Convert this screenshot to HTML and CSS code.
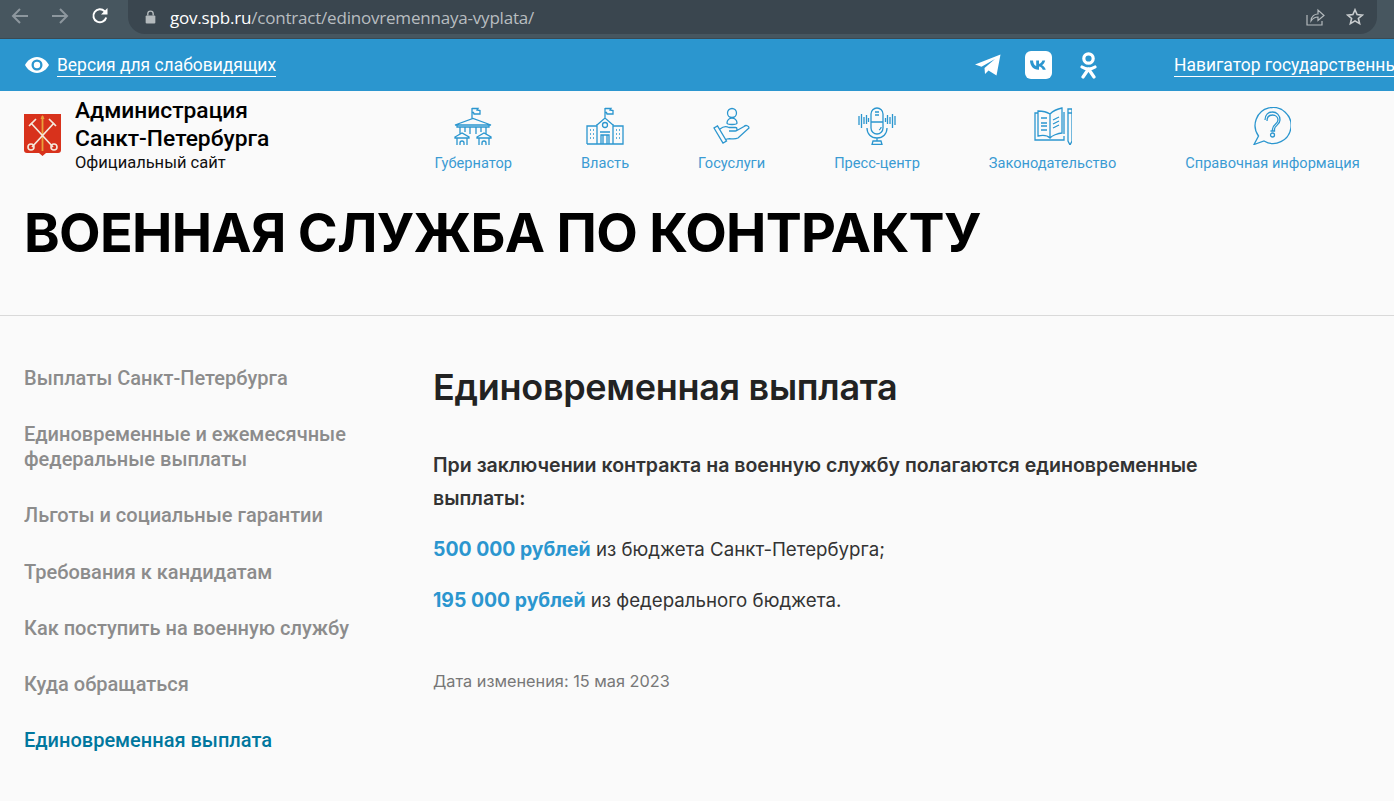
FILE: index.html
```html
<!DOCTYPE html>
<html lang="ru">
  <head>
    <meta charset="utf-8">
    <title>Единовременная выплата</title>
    <link rel="stylesheet" href="styles.css">
  </head>
  <body>
    <div class="chrome">
      <svg class="nav-ico" width="20" height="20" viewBox="0 0 20 20"><path d="M18 10H3M10 3l-7 7 7 7" fill="none" stroke="#8d979e" stroke-width="2"/></svg>
      <svg class="nav-ico" width="20" height="20" viewBox="0 0 20 20"><path d="M2 10h15M10 3l7 7-7 7" fill="none" stroke="#8d979e" stroke-width="2"/></svg>
      <svg class="nav-ico" width="20" height="20" viewBox="0 0 20 20"><path d="M16.2 11.500a6.500 6.500 0 1 1-1.600-6.200L16.500 7" fill="none" stroke="#fff" stroke-width="2"/><path d="M17.500 2v6.500H11z" fill="#fff"/></svg>
      <div class="omnibox">
        <svg width="11" height="14" viewBox="0 0 10 13"><path d="M2.500 5V3.500a2.500 2.500 0 0 1 5 0V5" fill="none" stroke="#b4babd" stroke-width="1.300"/><rect x="0.500" y="5" width="9" height="7.500" rx="1" fill="#b4babd"/></svg>
        <span class="url"><b>gov.spb.ru</b>/contract/edinovremennaya-vyplata/</span>
        <svg class="share" width="20" height="20" viewBox="0 0 20 20"><path d="M2 8v10h15v-4" fill="none" stroke="#b4babd" stroke-width="1.200"/><path d="M6 14c0-5 4-7 7-7V3l6 5.500-6 5V10c-3 0-5 1-7 4z" fill="none" stroke="#b4babd" stroke-width="1.200"/></svg>
        <svg width="18" height="18" viewBox="0 0 18 18"><path d="M9 1.800l2.100 4.800 5.200.5-3.900 3.400 1.200 5.100L9 12.900l-4.600 2.700 1.200-5.100L1.700 7.100l5.200-.5z" fill="none" stroke="#c9cdcf" stroke-width="1.600"/></svg>
      </div>
    </div>

    <div class="topbar">
      <svg class="eye" width="24" height="16" viewBox="0 0 24 16"><path fill-rule="evenodd" d="M12 0c5.500 0 9.700 3.700 12 8-2.300 4.300-6.500 8-12 8S2.300 12.300 0 8c2.300-4.300 6.500-8 12-8zm0 2.500a5.500 5.500 0 1 0 0 11 5.500 5.500 0 0 0 0-11z" fill="#fff"/><circle cx="12" cy="8" r="3.200" fill="#fff"/></svg>
      <a class="toplink" href="#">Версия для слабовидящих</a>
      <div class="socials">
        <svg class="tg" width="26" height="22" viewBox="0 0 26 22"><path d="M0 10.500L25.500 0.500 21.500 21.500 13.500 16.500 10 20 9.500 14 20 5 6.500 12.800z" fill="#fff"/></svg>
        <svg class="vk" width="27" height="28" viewBox="0 0 27 28"><rect width="27" height="28" rx="6" fill="#fff"/><path d="M5 9.500h3c.3 3.500 1.800 5.200 3.200 5.600V9.500H14v3.400c1.400-.2 2.800-1.700 3.400-3.400h2.800c-.5 2.300-2 3.900-3.200 4.700 1.200.6 3 2 3.800 4.500h-3c-.7-1.800-2-3-3.800-3.200v3.200h-.6C8.300 18.700 5.200 15 5 9.500z" fill="#2b96cf"/></svg>
        <svg width="17" height="27" viewBox="0 0 17 27"><circle cx="8.500" cy="6.500" r="4.700" fill="none" stroke="#fff" stroke-width="3.200"/><path d="M2 15c4 2.500 9 2.500 13 0M8.500 17l-5.500 8M8.500 17l5.500 8" fill="none" stroke="#fff" stroke-width="3.200" stroke-linecap="round"/></svg>
      </div>
      <a class="toplink nav-gov" href="#">Навигатор государственных услуг</a>
    </div>

    <header class="site-head">
      <div class="brand">
        <svg class="crest" width="37" height="42" viewBox="0 0 37 42">
          <path d="M0 0h37v36q0 3-3 3H22l-3.500 3L15 39H3q-3 0-3-3z" fill="#d8321c"/>
          <path d="M18.500 2v35" stroke="#e9a03a" stroke-width="1.800"/>
          <path d="M18.500 1l2 4h-4z" fill="#e9a03a"/>
          <path d="M7 9l22 24M30 9L8 33" stroke="#f4e9dc" stroke-width="1.700"/>
          <circle cx="7" cy="33" r="3" fill="none" stroke="#f4e9dc" stroke-width="1.600"/>
          <circle cx="30" cy="33" r="3" fill="none" stroke="#f4e9dc" stroke-width="1.600"/>
          <path d="M5 12l7-7M25 5l7 7" stroke="#f4e9dc" stroke-width="1.700"/>
        </svg>
        <div class="brand-text">
          <div class="brand-name">Администрация<br>Санкт-Петербурга</div>
          <div class="brand-sub">Официальный сайт</div>
        </div>
      </div>
      <nav class="mainnav">
        <a class="navitem" href="#">
          <svg width="38" height="38" viewBox="0 0 38 38" class="nico"><path d="M18 12V1M18 1.500h6l-1 1.500 3 .5v3.500h-6l-.5-1.500H18M1 18l18-6.500L37 18zM3 18v2h32v-2M6 20v7M11 20v5M16 20v7M22 20v7M27 20v5M32 20v7M1 30l7-4 7 4v1H1zM23 30l7-4 7 4v1H23zM3 31v7M13 31v7M25 31v7M35 31v7M6 38v-2a2 2 0 0 1 4 0v2M28 38v-2a2 2 0 0 1 4 0v2"/></svg>
          <span>Губернатор</span>
        </a>
        <a class="navitem" href="#">
          <svg width="38" height="38" viewBox="0 0 38 38" class="nico"><path d="M19 11V1M19 1.500h6l-1 1.500 3 .5v3.500h-6l-.5-1.500H19M11 18l8-7 8 7M11 17v20M27 17v20M1 37h36V19H27M11 19H1v18M15 37v-9h8v9M17 28v9M21 28v9M14 25h10"/><circle cx="19" cy="18" r="2.500"/><path d="M4 23h1M7 23h1M4 27h1M7 27h1M4 31h1M7 31h1M30 23h1M33 23h1M30 27h1M33 27h1M30 31h1M33 31h1"/></svg>
          <span>Власть</span>
        </a>
        <a class="navitem" href="#">
          <svg width="38" height="38" viewBox="0 0 38 38" class="nico"><circle cx="19" cy="6" r="4.500"/><path d="M14 16c0-3 2.500-5 5-5s5 2 5 5c0 1-3 1.500-5 1.500s-5-.5-5-1.500zM1 21l9 15 3.500-2-9-15zM7 22c3-2.500 6-3 9-1.500h6.500c2 0 2 3.500 0 3.500H16M23 24l8-4.500c2-2 5-.5 5 1.500L25 31c-4 2-8 0-11 1l-2 1"/></svg>
          <span>Госуслуги</span>
        </a>
        <a class="navitem" href="#">
          <svg width="38" height="38" viewBox="0 0 38 38" class="nico"><path d="M13 7a6 6 0 0 1 12 0v14a6 6 0 0 1-12 0zM13 15h12M9 21c0 6 4 10 10 10s10-4 10-10M19 31v3M15 34h8l1 3.500H14zM17 5h4M17 8h4M21 23c1.500-.5 2-1.500 2.200-3M1 9v9M3.500 7v14M6 10v7M8.500 8v9M10.500 11v4M27.500 11v4M29.500 8v9M32 10v7M34.500 7v14M37 9v9"/></svg>
          <span>Пресс-центр</span>
        </a>
        <a class="navitem" href="#">
          <svg width="38" height="38" viewBox="0 0 38 38" class="nico"><path d="M4 6H1v27h29V29M4 4v25c4-1 9-1 12 2 1.500-2 8-5 12-5V1c-5 1-9 3-12 6-3-2-8-3-12-3zM16 7v24M7 11h6M7 16h6M7 19h6M7 23h6M19 13l6-3M19 17l6-3M19 21l6-3M30 5v22M34 2h4v32l-2 4-2-4zM34 6h4"/></svg>
          <span>Законодательство</span>
        </a>
        <a class="navitem" href="#">
          <svg width="38" height="38" viewBox="0 0 38 38" class="nico"><path d="M5.500 29A18 18 0 1 1 11 34l-10 3.500zM14 14c0-4 2.500-6 5.500-6s5.500 2 5.500 5c0 4-5.500 4.500-5.500 9v2"/><path d="M12 13c0-5.500 3.500-8 7.500-8s7.500 3 7.500 8c0 5-5.500 5.500-5.500 9v2h-4"/><circle cx="19.500" cy="28" r="2"/></svg>
          <span>Справочная информация</span>
        </a>
      </nav>
    </header>

    <div class="title-block">
      <h1>ВОЕННАЯ СЛУЖБА ПО КОНТРАКТУ</h1>
    </div>

    <div class="content">
      <ul class="side">
        <li><a href="#">Выплаты Санкт-Петербурга</a></li>
        <li><a href="#">Единовременные и ежемесячные федеральные выплаты</a></li>
        <li><a href="#">Льготы и социальные гарантии</a></li>
        <li><a href="#">Требования к кандидатам</a></li>
        <li><a href="#">Как поступить на военную службу</a></li>
        <li><a href="#">Куда обращаться</a></li>
        <li><a class="current" href="#">Единовременная выплата</a></li>
      </ul>
      <main class="article">
        <h2>Единовременная выплата</h2>
        <p><strong>При заключении контракта на военную службу полагаются единовременные выплаты:</strong></p>
        <p><b class="sum">500 000 рублей</b> из бюджета Санкт-Петербурга;</p>
        <p><b class="sum">195 000 рублей</b> из федерального бюджета.</p>
        <div class="changed">Дата изменения: 15 мая 2023</div>
      </main>
    </div>
  </body>
</html>
```

FILE: styles.css
```css
* {
  box-sizing: border-box;
}
html, body {
  height: 801px;
  overflow: hidden;
}
body {
  margin: 0;
  background: #fafafa;
  font-family: Roboto, sans-serif;
  color: #222;
}
a {
  text-decoration: none;
}

/* browser bar */
.chrome {
  height: 39px;
  background: #47565f;
  border-bottom: 1px solid #3a4a53;
  display: flex;
  align-items: flex-start;
  padding: 6px 0 0 10px;
}
.nav-ico {
  margin: 0 20px 0 0;
}
.omnibox {
  margin-left: -2px;
  margin-top: -6px;
  width: 1249px;
  height: 34px;
  background: #3a464f;
  border-radius: 0 0 17px 17px;
  display: flex;
  align-items: center;
  padding: 0 13px 0 17px;
  color: #b8bdc0;
  font: 17px "Open Sans", sans-serif;
}
.url {
  margin-left: 14px;
  flex: 1;
  letter-spacing: -0.2px;
}
.url b {
  font-weight: 400;
  color: #fff;
}
.share {
  margin-right: 21px;
}

/* blue strip */
.topbar {
  height: 52px;
  background: #2b96cf;
  display: flex;
  align-items: center;
  padding-left: 25px;
  white-space: nowrap;
  overflow: hidden;
}
.eye {
  flex: none;
  margin-right: 8px;
}
.toplink {
  margin-top: 2px;
  color: #fff;
  font-size: 17.45px;
  line-height: 21px;
  border-bottom: 1px solid #fff;
}
.socials {
  display: flex;
  flex: none;
  align-items: center;
  margin-left: 699px;
  width: 199px;
}
.tg {
  margin-right: 24px;
}
.vk {
  margin-right: 28px;
}
.nav-gov {
  flex: none;
}

/* logo and main menu */
.site-head {
  display: flex;
  height: 91px;
  padding-left: 24px;
}
.brand {
  display: flex;
  align-items: center;
  width: 400px;
}
.crest {
  margin: 0 14px 3px 0;
}
.brand-text {
  margin-bottom: 4px;
}
.brand-name {
  font-size: 22.8px;
  font-weight: 500;
  line-height: 28px;
  color: #000;
}
.brand-sub {
  font-size: 16.5px;
  line-height: 19px;
  color: #111;
}
.mainnav {
  display: flex;
  gap: 69px;
  padding-left: 10.5px;
}
.navitem {
  display: flex;
  flex-direction: column;
  align-items: center;
  color: #3a9bd3;
  font-size: 14.6px;
  padding-top: 16px;
  white-space: nowrap;
}
.navitem span {
  margin-top: 9px;
}
.nico {
  fill: none;
  stroke: #2b96cf;
  stroke-width: 1.3;
}

/* page title */
.title-block {
  height: 134px;
  padding: 15px 24px 0;
  border-bottom: 1px solid #d9d9d9;
}
h1 {
  margin: 0;
  font: 700 54px/72px Inter, sans-serif;
  color: #000;
  letter-spacing: -0.7px;
}

/* content */
.content {
  display: flex;
  padding: 50px 0 0 24px;
}
.side {
  list-style: none;
  margin: 0;
  padding: 0;
  width: 409px;
  flex: none;
}
.side li {
  width: 340px;
  margin-bottom: 31.2px;
  font-size: 20px;
  font-weight: 500;
  line-height: 25px;
}
.side a {
  color: #8c8c8c;
}
.side a.current {
  color: #00779e;
}
.article {
  width: 800px;
}
h2 {
  margin: -2px 0 39px;
  font: 600 36px/46px Inter, sans-serif;
  color: #222;
  letter-spacing: -0.3px;
}
.article p {
  margin: 0 0 18px;
  font: 400 18.7px/33px Inter, sans-serif;
  color: #333;
}
.article strong {
  font-size: 19.55px;
  font-weight: 600;
}
.sum {
  font-size: 19.4px;
  color: #2b96cf;
  font-weight: 700;
}
.changed {
  margin-top: 53px;
  font: 400 16.3px/22px Inter, sans-serif;
  color: #777;
}
```
